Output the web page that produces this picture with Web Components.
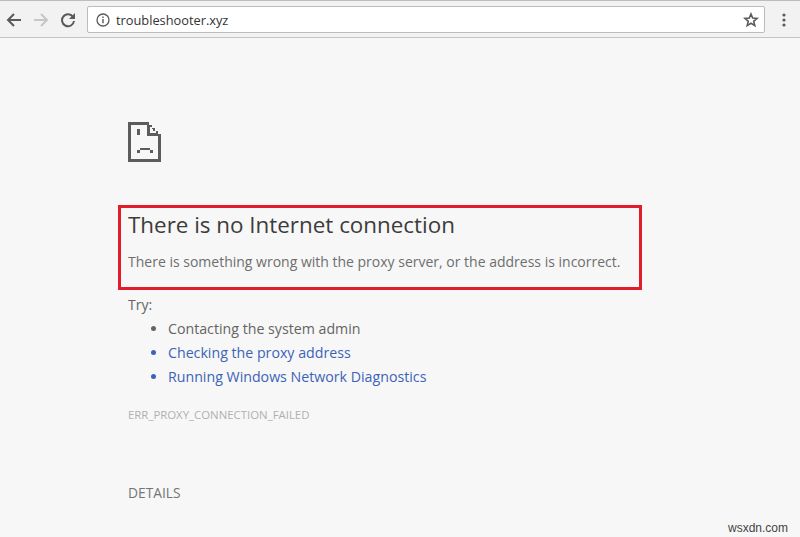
<!DOCTYPE html>
<html>
<head>
<meta charset="utf-8">
<title>troubleshooter.xyz</title>
<style>
	html, body { margin: 0; height: 100%; }
	body {
		width: 800px;
		height: 537px;
		overflow: hidden;
		display: flex;
		flex-direction: column;
		background: #f7f7f7;
		font-family: "Open Sans", "Noto Sans", sans-serif;
	}
</style>
</head>
<body>
<browser-toolbar url="troubleshooter.xyz"></browser-toolbar>
<error-page>
	<span slot="title">There is no Internet connection</span>
	<span slot="message">There is something wrong with the proxy server, or the address is incorrect.</span>
	<try-item>Contacting the system admin</try-item>
	<try-item link>Checking the proxy address</try-item>
	<try-item link>Running Windows Network Diagnostics</try-item>
</error-page>
<script>
const toolbarCss = `
	<style>
		:host {
			display: flex;
			align-items: center;
			flex: none;
			box-sizing: border-box;
			height: 38px;
			padding: 1px 0 0 0;
			background: #f2f2f2;
			border-top: 1px solid #bdbdbd;
			border-bottom: 1px solid #c4c4c4;
		}
		.nav { display: flex; align-items: center; gap: 11px; padding-left: 6px; }
		svg { display: block; }
		.omnibox {
			display: flex;
			align-items: center;
			box-sizing: border-box;
			width: 678px;
			height: 27px;
			margin-left: 11px;
			padding: 0 6px 0 8px;
			background: #fff;
			border: 1px solid #bcbcbc;
			border-radius: 2px;
		}
		.url {
			flex: 1;
			margin-left: 6px;
			font: 12.8px "Open Sans", "Noto Sans", sans-serif;
			color: #333;
		}
		.star { margin-right: -1px; }
		.menu { margin-left: 17px; }
	</style>
`;

class BrowserToolbar extends HTMLElement {
	constructor() {
		super();
		this.shadow = this.attachShadow({ mode: 'open' });
		this.shadow.innerHTML = `${toolbarCss}
			<div class="nav">
				<svg width="16" height="16" viewBox="0 0 16 16" fill="none" stroke="#5a5a5a" stroke-width="2"><path d="M15 8H2M8 2L2 8l6 6"/></svg>
				<svg width="16" height="16" viewBox="0 0 16 16" fill="none" stroke="#c6c6c6" stroke-width="2"><path d="M1 8h13M8 2l6 6-6 6"/></svg>
				<svg width="16" height="16" viewBox="0 0 16 16" fill="none"><path d="M13.2 5.2A6 6 0 1 0 14 9" stroke="#5a5a5a" stroke-width="2"/><path d="M15 1v6H9z" fill="#5a5a5a"/></svg>
			</div>
			<div class="omnibox">
				<svg width="14" height="14" viewBox="0 0 14 14" fill="none" stroke="#5a5a5a"><circle cx="7" cy="7" r="6" stroke-width="1.3"/><path d="M7 6v4.2M7 3.4v1.5" stroke-width="1.4"/></svg>
				<span class="url"></span>
				<svg class="star" width="16" height="16" viewBox="0 0 16 16" fill="none" stroke="#5a5a5a" stroke-width="1.6" stroke-linejoin="miter"><path d="M8 2l1.7 4.1 4.4.3-3.4 2.9 1.1 4.3L8 11.3l-3.8 2.3 1.1-4.3-3.4-2.9 4.4-.3z"/></svg>
			</div>
			<svg class="menu" width="4" height="14" viewBox="0 0 4 14" fill="#5a5a5a"><circle cx="2" cy="2" r="1.6"/><circle cx="2" cy="7" r="1.6"/><circle cx="2" cy="12" r="1.6"/></svg>
		`;
	}

	connectedCallback() {
		this.shadow.querySelector('.url').textContent = this.getAttribute('url');
	}
}

const pageCss = `
	<style>
		:host {
			display: block;
			flex: 1;
			padding: 84px 0 0 118px;
			color: #646464;
			font-size: 14px;
		}
		.icon { display: block; margin-left: 10px; }
		.highlight {
			box-sizing: border-box;
			width: 524px;
			height: 85px;
			margin-top: 43px;
			padding: 2px 0 0 7px;
			border: 3px solid #e31c2c;
		}
		h1 {
			margin: 0;
			font-size: 22.4px;
			font-weight: 400;
			line-height: 30px;
			color: #3c3c3c;
		}
		p {
			margin: 12px 0 0;
			font-size: 14px;
			line-height: 20px;
			color: #6e6e6e;
		}
		.try { margin: 5px 0 0 10px; line-height: 20px; }
		ul { margin: 2px 0 0 10px; padding: 0 0 0 40px; font-size: 14.2px; }
		.code {
			margin: 18px 0 0 10px;
			font-size: 11.4px;
			line-height: 16px;
			color: #b0b0b0;
		}
		.details {
			margin: 61px 0 0 10px;
			font-size: 13.8px;
			line-height: 18px;
			color: #757575;
		}
		.credit {
			position: absolute;
			left: 728px;
			top: 521px;
			font: 12px "Liberation Sans", sans-serif;
			color: #444;
		}
	</style>
`;

class ErrorPage extends HTMLElement {
	constructor() {
		super();
		this.attachShadow({ mode: 'open' }).innerHTML = `${pageCss}
			<svg class="icon" width="33" height="40" viewBox="0 0 33 40" shape-rendering="crispEdges" fill="#5c5c5c">
				<path fill-rule="evenodd" d="M0 0h21v3h3v3h3v3h3v3h3v28H0zM3 3v34h27V14H19V3zM22 5v6h6V9h-3V7h-1V5z"/>
				<path d="M9 7h3v6H9zM12 26h10v2H12zM9 28h3v3H9zM22 28h3v3h-3z"/>
			</svg>
			<div class="highlight">
				<h1><slot name="title"></slot></h1>
				<p><slot name="message"></slot></p>
			</div>
			<div class="try">Try:</div>
			<ul><slot></slot></ul>
			<div class="code">ERR_PROXY_CONNECTION_FAILED</div>
			<div class="details">DETAILS</div>
			<div class="credit">wsxdn.com</div>
		`;
	}
}

class TryItem extends HTMLElement {
	constructor() {
		super();
		this.attachShadow({ mode: 'open' }).innerHTML = `
			<style>
				:host {
					display: list-item;
					height: 24px;
					line-height: 24px;
					color: #646464;
				}
				:host([link]) { color: #3b63b8; }
			</style>
			<slot></slot>
		`;
	}
}

customElements.define('browser-toolbar', BrowserToolbar);
customElements.define('error-page', ErrorPage);
customElements.define('try-item', TryItem);
</script>
</body>
</html>
